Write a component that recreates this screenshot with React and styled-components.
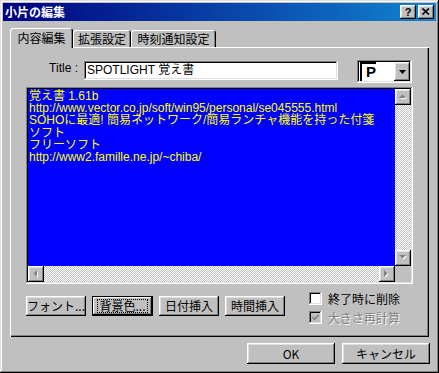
import React from 'react';
import styled, { createGlobalStyle } from 'styled-components';

const GlobalStyle = createGlobalStyle`
  html, body { margin: 0; padding: 0; background: #c0c0c0; }
  * { box-sizing: border-box; }
  body {
    font-family: "Liberation Sans", "Noto Sans CJK JP", sans-serif;
    font-size: 12px;
    color: #000;
  }
`;

const raised = 'inset -1px -1px #000, inset 1px 1px #fff, inset -2px -2px #808080, inset 2px 2px #dfdfdf';
const sunken = 'inset -1px -1px #fff, inset 1px 1px #808080, inset -2px -2px #dfdfdf, inset 2px 2px #000';

const Window = styled.div`
  width: 439px;
  height: 373px;
  padding: 3px;
  background: #c0c0c0;
  box-shadow: inset -1px -1px #000, inset 1px 1px #dfdfdf, inset -2px -2px #808080, inset 2px 2px #fff;
  display: flex;
  flex-direction: column;
`;

const TitleBar = styled.div`
  height: 18px;
  background: linear-gradient(90deg, #000080, #1084d0);
  color: #fff;
  font-weight: bold;
  font-family: "Noto Sans CJK JP", sans-serif;
  font-size: 12px;
  display: flex;
  align-items: center;
  justify-content: space-between;
  padding: 0 2px 0 2px;
`;

const Caption = styled.span`
  line-height: 18px;
`;

const CaptionButtons = styled.div`
  display: flex;
  gap: 2px;
`;

const CaptionButton = styled.div`
  width: 16px;
  height: 14px;
  background: #c0c0c0;
  box-shadow: ${raised};
  color: #000;
  font-family: "Liberation Sans", sans-serif;
  font-size: 11px;
  font-weight: bold;
  display: flex;
  align-items: center;
  justify-content: center;
  padding-bottom: 1px;
`;

const Body = styled.div`
  flex: 1;
  padding: 7px 4px 0 7px;
  display: flex;
  flex-direction: column;
`;

const TabRow = styled.div`
  height: 19px;
  display: flex;
  align-items: flex-end;
`;

const Tab = styled.div`
  width: ${({ w }) => w}px;
  height: ${({ active }) => (active ? 20 : 17)}px;
  margin-bottom: ${({ active }) => (active ? -1 : 0)}px;
  position: relative;
  z-index: ${({ active }) => (active ? 1 : 0)};
  background: #c0c0c0;
  border-radius: 3px 3px 0 0;
  box-shadow: inset 1px 1px #fff, inset -1px 0 #000, inset -2px 0 #808080;
  font-family: "Noto Sans CJK JP", sans-serif;
  line-height: 14px;
  text-align: center;
  padding-top: ${({ active }) => (active ? 3 : 2)}px;
`;

const Panel = styled.div`
  width: 419px;
  height: 290px;
  box-shadow: inset 1px 1px #fff, inset -1px -1px #000, inset -2px -2px #808080;
  padding: 13px 16px 0 16px;
  display: flex;
  flex-direction: column;
`;

const TitleRow = styled.div`
  height: 23px;
  display: flex;
  align-items: flex-start;
`;

const FieldLabel = styled.label`
  width: 52px;
  margin-right: 6px;
  text-align: right;
  line-height: 14px;
  margin-top: 1px;
`;

const TextInput = styled.div`
  width: 254px;
  height: 19px;
  margin-top: 1px;
  background: #fff;
  box-shadow: ${sunken};
  padding: 2px 3px;
  line-height: 15px;
  font-family: "Liberation Sans", "Noto Sans CJK JP", sans-serif;
  white-space: nowrap;
`;

const Combo = styled.div`
  width: 55px;
  height: 23px;
  margin-left: auto;
  margin-right: 1px;
  background: #fff;
  box-shadow: ${sunken};
  padding: 2px;
  display: flex;
`;

const ComboValue = styled.div`
  flex: 1;
  padding: 0 0 0 1px;
`;

const PreviewGlyph = styled.div`
  width: 16px;
  height: 19px;
  border-left: 2px solid #000;
  border-top: 2px solid #000;
  font-family: "Liberation Sans", sans-serif;
  font-size: 15px;
  font-weight: bold;
  line-height: 16px;
  padding-left: 4px;
`;

const ArrowButton = styled.div`
  width: 16px;
  height: ${({ h }) => h || 16}px;
  background: #c0c0c0;
  box-shadow: ${raised};
  display: flex;
  align-items: center;
  justify-content: center;
  flex-shrink: 0;
`;

const Memo = styled.div`
  margin-top: 4px;
  width: 387px;
  height: 197px;
  box-shadow: ${sunken};
  padding: 2px;
  display: grid;
  grid-template-columns: 1fr 16px;
  grid-template-rows: 1fr 16px;
`;

const MemoText = styled.div`
  background: #0000ff;
  color: #ffff00;
  padding: 1px 0 0 1px;
  font-family: "Liberation Sans", "Noto Sans CJK JP", sans-serif;
  font-size: 12px;
  line-height: 12.2px;
  white-space: nowrap;
  overflow: hidden;
`;

const checker = `
  background-color: #fff;
  background-image: repeating-conic-gradient(#c0c0c0 0 25%, #fff 0 50%);
  background-size: 2px 2px;
`;

const VScroll = styled.div`
  display: flex;
  flex-direction: column;
  justify-content: space-between;
  ${checker}
`;

const HScroll = styled.div`
  display: flex;
  justify-content: space-between;
  ${checker}
`;

const Corner = styled.div`
  background: #c0c0c0;
`;

const BottomRow = styled.div`
  margin-top: 8px;
  display: flex;
  align-items: flex-start;
`;

const ButtonGroup = styled.div`
  margin-top: 4px;
  display: flex;
  gap: 6px;
`;

const Button = styled.div`
  width: ${({ w }) => w || 60}px;
  height: ${({ h }) => h || 20}px;
  background: #c0c0c0;
  box-shadow: ${({ isDefault }) => (isDefault ? `inset 0 0 0 1px #000, inset -2px -2px #000, inset 2px 2px #fff, inset -3px -3px #808080` : raised)};
  font-family: "Noto Sans CJK JP", sans-serif;
  display: flex;
  align-items: center;
  justify-content: center;
  line-height: 14px;
`;

const Focus = styled.span`
  border: 1px dotted #000;
  padding: 0 1px;
  line-height: 12px;
`;

const Checks = styled.div`
  margin-left: 24px;
  display: flex;
  flex-direction: column;
  gap: 6px;
`;

const CheckRow = styled.div`
  display: flex;
  align-items: center;
  height: 13px;
  gap: 6px;
  font-family: "Noto Sans CJK JP", sans-serif;
  color: ${({ disabled }) => (disabled ? '#808080' : '#000')};
  text-shadow: ${({ disabled }) => (disabled ? '1px 1px #fff' : 'none')};
`;

const Box = styled.div`
  width: 13px;
  height: 13px;
  background: ${({ disabled }) => (disabled ? '#c0c0c0' : '#fff')};
  box-shadow: ${sunken};
  display: flex;
  align-items: center;
  justify-content: center;
`;

const Footer = styled.div`
  margin-top: 6px;
  display: flex;
  justify-content: flex-end;
  gap: 7px;
  padding-right: 2px;
`;

const Tri = ({ dir }) => {
  const pts = {
    up: '0,4 7,4 3.5,0.5',
    down: '0,0 7,0 3.5,3.5',
    left: '4,0 4,7 0.5,3.5',
    right: '0,0 0,7 3.5,3.5',
  }[dir];
  const vertical = dir === 'up' || dir === 'down';
  const w = vertical ? 8 : 5;
  const h = vertical ? 5 : 8;
  return (
    <svg width={w + 1} height={h + 1} viewBox={`0 0 ${w + 1} ${h + 1}`}>
      <polygon points={pts} fill="#fff" transform="translate(1 1)" />
      <polygon points={pts} fill="#808080" />
    </svg>
  );
};

const lines = [
  '覚え書 1.61b',
  'http://www.vector.co.jp/soft/win95/personal/se045555.html',
  'SOHOに最適! 簡易ネットワーク/簡易ランチャ機能を持った付箋',
  'ソフト',
  'フリーソフト',
  'http://www2.famille.ne.jp/~chiba/',
];

export default function App() {
  return (
    <>
      <GlobalStyle />
      <Window>
        <TitleBar>
          <Caption>小片の編集</Caption>
          <CaptionButtons>
            <CaptionButton>?</CaptionButton>
            <CaptionButton>
              <svg width="8" height="7" viewBox="0 0 8 7">
                <path d="M0.5 0.5 L7 6.5 M7 0.5 L0.5 6.5" stroke="#000" strokeWidth="1.6" />
              </svg>
            </CaptionButton>
          </CaptionButtons>
        </TitleBar>
        <Body>
          <TabRow>
            <Tab active w={63}>内容編集</Tab>
            <Tab w={58}>拡張設定</Tab>
            <Tab w={85}>時刻通知設定</Tab>
          </TabRow>
          <Panel>
            <TitleRow>
              <FieldLabel>Title :</FieldLabel>
              <TextInput>SPOTLIGHT 覚え書</TextInput>
              <Combo>
                <ComboValue>
                  <PreviewGlyph>P</PreviewGlyph>
                </ComboValue>
                <ArrowButton h={19}>
                  <svg width="7" height="4" viewBox="0 0 7 4">
                    <polygon points="0,0 7,0 3.5,4" fill="#000" />
                  </svg>
                </ArrowButton>
              </Combo>
            </TitleRow>
            <Memo>
              <MemoText>
                {lines.map((l) => (
                  <div key={l}>{l}</div>
                ))}
              </MemoText>
              <VScroll>
                <ArrowButton><Tri dir="up" /></ArrowButton>
                <ArrowButton><Tri dir="down" /></ArrowButton>
              </VScroll>
              <HScroll>
                <ArrowButton><Tri dir="left" /></ArrowButton>
                <ArrowButton><Tri dir="right" /></ArrowButton>
              </HScroll>
              <Corner />
            </Memo>
            <BottomRow>
              <ButtonGroup>
                <Button>フォント...</Button>
                <Button isDefault w={61}><Focus>背景色...</Focus></Button>
                <Button>日付挿入</Button>
                <Button>時間挿入</Button>
              </ButtonGroup>
              <Checks>
                <CheckRow>
                  <Box />
                  終了時に削除
                </CheckRow>
                <CheckRow disabled>
                  <Box disabled>
                    <svg width="7" height="7" viewBox="0 0 7 7">
                      <path d="M0.5 3 L2.5 5.5 L6.5 1" stroke="#808080" strokeWidth="1.6" fill="none" />
                    </svg>
                  </Box>
                  大きさ再計算
                </CheckRow>
              </Checks>
            </BottomRow>
          </Panel>
          <Footer>
            <Button w={88} h={21}>OK</Button>
            <Button w={88} h={21}>キャンセル</Button>
          </Footer>
        </Body>
      </Window>
    </>
  );
}
